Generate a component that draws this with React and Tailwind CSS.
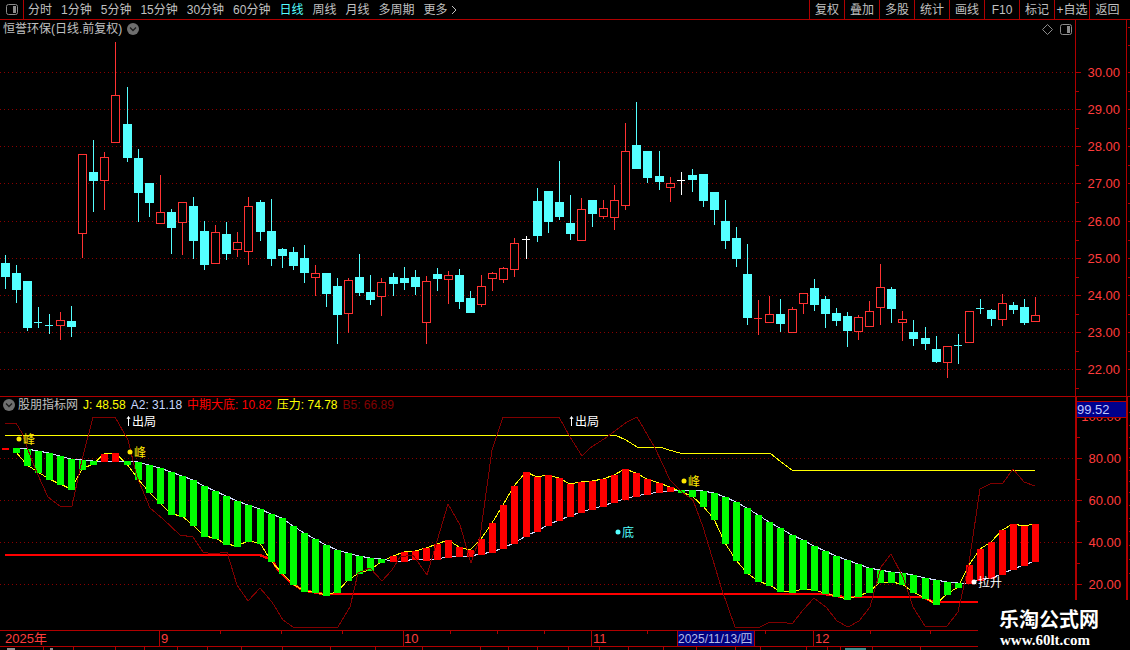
import React from "react";

const tabs = [
  { label: "分时" },
  { label: "1分钟" },
  { label: "5分钟" },
  { label: "15分钟" },
  { label: "30分钟" },
  { label: "60分钟" },
  { label: "日线", active: true },
  { label: "周线" },
  { label: "月线" },
  { label: "多周期" },
];

const tools = ["复权", "叠加", "多股", "统计", "画线", "F10", "标记", "+自选"];

// [type, high, top, bottom, low] in page pixels, one per trading day
const candles = [
  ["c", 255, 263, 276, 288], ["c", 265, 273, 289, 302], ["c", 281, 281, 327, 330], ["c", 307, 322, 322, 327],
  ["c", 314, 325, 325, 333], ["r", 312, 320, 325, 339], ["c", 306, 321, 326, 336], ["r", 154, 154, 233, 257],
  ["c", 140, 172, 180, 211], ["r", 152, 157, 180, 209], ["r", 42, 95, 142, 142], ["c", 87, 124, 157, 161],
  ["c", 149, 158, 192, 221], ["c", 183, 183, 202, 216], ["r", 175, 212, 223, 223], ["c", 209, 212, 227, 253],
  ["r", 202, 202, 222, 254], ["c", 197, 206, 240, 258], ["c", 221, 231, 264, 269], ["r", 225, 232, 263, 263],
  ["c", 222, 234, 253, 259], ["r", 232, 242, 249, 256], ["r", 197, 206, 251, 264], ["c", 200, 202, 231, 240],
  ["c", 199, 231, 258, 265], ["c", 248, 249, 255, 267], ["c", 247, 252, 265, 269], ["c", 245, 258, 272, 282],
  ["r", 265, 273, 277, 295], ["c", 273, 273, 293, 306], ["c", 278, 286, 314, 343], ["r", 278, 280, 313, 332],
  ["c", 254, 277, 292, 295], ["c", 275, 292, 299, 304], ["r", 278, 282, 296, 315], ["c", 273, 277, 283, 295],
  ["c", 267, 278, 282, 289], ["c", 270, 277, 286, 294], ["r", 276, 281, 322, 343], ["c", 268, 274, 278, 290],
  ["r", 271, 275, 279, 303], ["c", 269, 275, 301, 308], ["c", 291, 298, 312, 312], ["r", 275, 286, 304, 306],
  ["r", 272, 273, 278, 290], ["r", 267, 268, 279, 282], ["r", 238, 243, 269, 276], ["w", 236, 239, 239, 258],
  ["c", 188, 201, 235, 241], ["c", 191, 191, 221, 232], ["c", 161, 202, 216, 219], ["c", 195, 223, 233, 239],
  ["r", 198, 209, 240, 240], ["c", 200, 200, 213, 226], ["r", 200, 208, 216, 218], ["r", 185, 200, 217, 229],
  ["r", 123, 151, 205, 209], ["c", 102, 145, 168, 168], ["c", 151, 151, 177, 182], ["c", 151, 176, 181, 189],
  ["r", 177, 183, 187, 201], ["w", 172, 180, 180, 194], ["c", 169, 175, 179, 191], ["c", 174, 174, 200, 206],
  ["c", 192, 192, 209, 224], ["c", 200, 221, 240, 248], ["c", 227, 238, 258, 266], ["c", 244, 274, 317, 324],
  ["r", 300, 318, 318, 334], ["r", 296, 314, 322, 322], ["c", 299, 314, 323, 331], ["r", 307, 309, 332, 332],
  ["r", 293, 293, 303, 313], ["c", 279, 288, 304, 310], ["c", 296, 299, 313, 327], ["c", 308, 313, 320, 325],
  ["c", 312, 316, 330, 346], ["r", 315, 317, 331, 339], ["r", 301, 311, 326, 326], ["r", 264, 287, 307, 324],
  ["c", 287, 289, 308, 322], ["r", 311, 319, 322, 340], ["c", 320, 332, 338, 345], ["c", 327, 338, 343, 349],
  ["c", 336, 349, 361, 362], ["r", 346, 346, 362, 377], ["c", 334, 345, 345, 363], ["r", 311, 311, 342, 342],
  ["c", 299, 308, 308, 313], ["c", 309, 310, 318, 325], ["r", 294, 303, 319, 325], ["c", 302, 305, 309, 313],
  ["c", 299, 307, 322, 324], ["r", 297, 315, 321, 321],
];

// [top, bottom] of each indicator bar, page pixels
const bars = [
  [448, 449], [448, 452], [449, 465], [451, 472], [453, 479], [456, 484], [459, 489], [460, 469],
  [461, 464], [454, 461], [453, 461], [461, 464], [462, 479], [465, 492], [468, 503], [472, 514],
  [476, 516], [480, 525], [486, 536], [491, 538], [496, 544], [501, 546], [505, 541], [509, 543],
  [514, 561], [518, 573], [526, 584], [533, 591], [539, 592], [545, 595], [550, 592], [553, 580],
  [556, 573], [558, 570], [559, 562], [556, 561], [552, 561], [551, 559], [548, 560], [544, 559],
  [540, 557], [547, 556], [550, 556], [539, 554], [523, 552], [505, 548], [486, 543], [472, 536],
  [477, 531], [475, 525], [478, 520], [484, 516], [482, 512], [481, 509], [479, 506], [475, 502],
  [469, 499], [473, 496], [479, 494], [483, 492], [487, 491], [490, 492], [490, 496], [491, 506],
  [493, 519], [497, 543], [502, 560], [508, 573], [515, 581], [522, 585], [528, 591], [535, 592],
  [540, 589], [546, 590], [551, 593], [556, 596], [560, 599], [564, 596], [568, 592], [570, 582],
  [572, 582], [573, 584], [575, 592], [578, 598], [580, 604], [582, 594], [583, 587], [565, 583],
  [549, 580], [542, 578], [530, 574], [524, 569], [526, 565], [524, 561],
];

const isRedBar = (i) => i === 0 || i === 9 || i === 10 || (i >= 35 && i <= 60) || i >= 87;
const dayX = (i) => 5 + 11 * i + Math.floor((i + 1) / 12);

const priceLevels = [
  [72, "30.00"], [109, "29.00"], [146, "28.00"], [183, "27.00"], [221, "26.00"],
  [258, "25.00"], [295, "24.00"], [332, "23.00"], [369, "22.00"],
];
const indicatorLevels = [
  [458, "80.00"], [500, "60.00"], [542, "40.00"], [584, "20.00"],
];

const b5Line = "5,423 16,423 22,433 31,458 37,473 48,497 60,506 72,506 82,460 93,417 115,417 128,440 137,477 150,508 163,519 180,535 193,537 203,552 213,554 227,552 237,585 248,601 260,588 272,602 283,620 293,627 338,627 350,607 358,573 370,568 382,581 392,570 400,557 413,555 427,575 448,504 460,525 471,563 480,537 492,450 503,417 559,417 570,437 582,456 590,448 607,437 627,422 637,417 655,448 670,480 683,493 693,500 703,527 722,590 735,627 760,627 770,622 782,622 792,624 803,610 814,598 826,607 837,621 848,627 859,621 870,607 881,567 891,554 903,577 913,607 925,626 947,626 958,612 969,563 980,489 992,483 1003,483 1013,469 1024,482 1035,486";
const pressureLine = "5,435 615,435 626,440 637,447 660,447 669,450 680,453 770,453 781,462 792,470 1035,470";
const bottomLine = "5,555 260,555 272,560 278,570 290,582 302,590 323,594 825,594 843,597 923,597 933,602 985,602";

const lineTop = bars.slice(1).map((b, n) => `${dayX(n + 1)},${isRedBar(n + 1) ? b[0] : b[1]}`).join(" ");
const lineBottom = bars.slice(1).map((b, n) => `${dayX(n + 1)},${isRedBar(n + 1) ? b[1] : b[0]}`).join(" ");

const Chevron = ({ className }) => (
  <svg width="12" height="12" viewBox="0 0 12 12" className={className}>
    <circle cx="6" cy="6" r="6" fill="#6f6f6f" />
    <path d="M3 4.5 L6 7.5 L9 4.5" fill="none" stroke="#1c1c1c" strokeWidth="1.3" />
  </svg>
);

const PanelIcon = ({ className }) => (
  <svg width="12" height="11" viewBox="0 0 12 11" className={className}>
    <rect x="0.5" y="0.5" width="11" height="10" rx="2" fill="none" stroke="#8c8c8c" />
    <rect x="7" y="2" width="3" height="7" fill="#8c8c8c" />
  </svg>
);

const Candle = ({ c, i }) => {
  const [type, hi, top, bot, lo] = c;
  const x = dayX(i);
  const color = type === "c" ? "#54ffff" : type === "w" ? "#ffffff" : "#ff3232";

  if (top === bot) {
    return (
      <g fill={color}>
        <rect x={x} y={hi} width="1" height={lo - hi + 1} />
        <rect x={x - 4} y={top} width="8" height="1" />
      </g>
    );
  }

  return (
    <g>
      <rect x={x} y={hi} width="1" height={top - hi} fill={color} />
      <rect x={x} y={bot} width="1" height={lo - bot + 1} fill={color} />
      {type === "c" ? (
        <rect x={x - 4} y={top} width="9" height={bot - top + 1} fill={color} />
      ) : (
        <rect x={x - 3.5} y={top + 0.5} width="8" height={bot - top} fill="#000" stroke={color} />
      )}
    </g>
  );
};

// one dark red pixel every four, like the terminal's dotted grid
const GridRows = ({ id, levels }) => (
  <g>
    <defs>
      <pattern id={id} width="4" height="1" patternUnits="userSpaceOnUse">
        <rect width="1" height="1" fill="#8a0000" />
      </pattern>
    </defs>
    {levels.map(([y]) => (
      <g key={y} transform={`translate(0 ${y})`}>
        <rect width="1075" height="1" fill={`url(#${id})`} />
      </g>
    ))}
  </g>
);

const Marker = ({ x, y, color, label, dot = "#ffe800" }) => (
  <g>
    <circle cx={x} cy={y} r="2.5" fill={dot} />
    <text x={x + 4} y={y + 5} fontSize="12" fill={color}>{label}</text>
  </g>
);

const ExitMark = ({ x }) => (
  <g>
    <path d={`M${x + 0.5} 426 V417 M${x - 1} 419 L${x + 0.5} 416.5 L${x + 2} 419`} stroke="#fff" fill="none" />
    <text x={x + 4} y="426" fontSize="12" fill="#fff">出局</text>
  </g>
);

const AxisTicks = ({ levels, offset, step }) => (
  <svg width="49" height="100%" viewBox={offset} className="block">
    {levels.map(([y, label]) => (
      <g key={label}>
        <rect x="0" y={y} width="5" height="1" fill="#b00000" />
        <rect x="0" y={y + step} width="3" height="1" fill="#b00000" />
        <text x="44" y={y + 5} textAnchor="end" fontSize="13" fill="#ff3c3c">{label}</text>
      </g>
    ))}
  </svg>
);

const StripTicks = ({ ys, offset }) => (
  <svg width="4" height="100%" viewBox={offset} className="block">
    {ys.map((y) => (
      <rect key={y} x="1" y={y} width="3" height="1" fill="#b00000" />
    ))}
  </svg>
);

const timeTicksTop = [220, 281, 342, 450, 497, 544, 647, 700, 765, 870, 930];
const timeTicksBottom = [43, 73, 115, 144, 177, 207, 241, 282, 330, 375, 422, 480, 508, 537, 568, 599, 628, 663, 696, 735, 760, 806, 827, 840, 872, 920];

const App = () => {
  return (
    <div className="relative w-[1130px] h-[650px] bg-black overflow-hidden flex flex-col text-[12px] leading-none text-[#c0c0c0] font-['Liberation_Sans','Noto_Sans_CJK_SC',sans-serif]">

      {/* TOP BAR */}
      <div className="h-[20px] shrink-0 flex items-stretch border-b border-[#b00000]">
        <div className="w-[24px] flex items-center justify-center border-r border-[#b00000]">
          <PanelIcon />
        </div>
        <div className="flex items-center gap-[9px] pl-[4px]">
          {tabs.map((tab) => (
            <span key={tab.label} className={tab.active ? "text-[#54ffff]" : ""}>{tab.label}</span>
          ))}
          <span className="flex items-center gap-[3px]">
            更多
            <svg width="6" height="10" viewBox="0 0 6 10">
              <path d="M1 1 L5 5 L1 9" fill="none" stroke="#c0c0c0" />
            </svg>
          </span>
        </div>
        <div className="ml-auto flex items-stretch">
          {tools.map((tool) => (
            <span key={tool} className="w-[35px] flex items-center justify-center border-l border-[#b00000]">{tool}</span>
          ))}
          <span className="w-[41px] pr-[5px] flex items-center justify-center border-l border-[#b00000]">返回</span>
        </div>
      </div>

      {/* PRICE PANE */}
      <div className="h-[377px] shrink-0 flex border-b border-[#b00000]">
        <div className="relative w-[1075px]">
          <svg width="1075" height="376" viewBox="0 20 1075 376" className="block" shapeRendering="crispEdges">
            <GridRows id="price-dots" levels={priceLevels} />
            {candles.map((c, i) => (
              <Candle key={i} c={c} i={i} />
            ))}
          </svg>
          <div className="absolute left-[3px] top-[3px] flex items-center gap-[5px]">
            <span>恒誉环保(日线.前复权)</span>
            <Chevron />
          </div>
          <div className="absolute right-[3px] top-[4px] flex items-center gap-[7px]">
            <svg width="11" height="11" viewBox="0 0 11 11">
              <path d="M5.5 0.5 L10.5 5.5 L5.5 10.5 L0.5 5.5 Z" fill="none" stroke="#8c8c8c" />
            </svg>
            <PanelIcon />
          </div>
        </div>
        <div className="w-[51px] border-l border-[#b00000]">
          <AxisTicks levels={priceLevels} offset="0 20 49 376" step={19} />
        </div>
        <div className="w-[4px] border-l border-[#b00000]">
          <StripTicks ys={[27, 45, 72, 91, 109, 128, 146, 165, 183, 203, 221, 240, 258, 277, 295, 314, 332, 351, 369]} offset="0 20 4 376" />
        </div>
      </div>

      {/* INDICATOR PANE */}
      <div className="h-[233px] shrink-0 flex">
        <div className="relative w-[1075px]">
          <svg width="1075" height="233" viewBox="0 397 1075 233" className="block" shapeRendering="crispEdges" fontFamily="'Noto Sans CJK SC', sans-serif">
            <GridRows id="indicator-dots" levels={indicatorLevels} />
            <polyline points={bottomLine} fill="none" stroke="#ff0000" strokeWidth="2.5" />
            <polyline points={pressureLine} fill="none" stroke="#ffff00" />
            <polyline points={lineTop} fill="none" stroke="#ffff00" />
            <polyline points={lineBottom} fill="none" stroke="#d0dcff" />
            {bars.map((b, i) => (
              <rect
                key={i}
                x={dayX(i) - 3}
                y={b[0]}
                width="7"
                height={b[1] - b[0] + 1}
                fill={isRedBar(i) ? "#ff0000" : "#00ff00"}
              />
            ))}
            <polyline points={b5Line} fill="none" stroke="#800000" />
            <g shapeRendering="auto">
              <Marker x={19} y={439} color="#ffe800" label="峰" />
              <Marker x={130} y={452} color="#ffe800" label="峰" />
              <Marker x={684} y={481} color="#ffe800" label="峰" />
              <Marker x={618} y={532} color="#54ffff" label="底" dot="#54ffff" />
              <Marker x={974} y={582} color="#ffffff" label="拉升" dot="#ffffff" />
              <ExitMark x={128} />
              <ExitMark x={571} />
            </g>
          </svg>
          <div className="absolute left-[3px] top-[2px] flex items-center whitespace-nowrap">
            <Chevron />
            <span className="ml-[3px]">股朋指标网</span>
            <div className="ml-[5px] flex gap-[5px]">
              <span className="text-[#ffff00]">J: 48.58</span>
              <span className="text-[#c8d8ff]">A2: 31.18</span>
              <span className="text-[#ff0000]">中期大底: 10.82</span>
              <span className="text-[#ffff00]">压力: 74.78</span>
              <span className="text-[#800000]">B5: 66.89</span>
            </div>
          </div>
        </div>
        <div className="relative w-[51px] border-l-2 border-[#b00000]">
          <AxisTicks levels={[[416, "100.00"], ...indicatorLevels]} offset="0 397 49 233" step={21} />
          <div className="absolute left-0 right-0 top-[4px] h-[17px] bg-[#00008c] border-y border-[#b00000] text-[#c0c8ff] text-[13px] flex items-center">99.52</div>
        </div>
        <div className="w-[4px] border-l-2 border-[#b00000]">
          <StripTicks ys={[412, 425, 437, 448, 457, 470, 481, 492, 505, 518, 531, 545, 559, 573]} offset="0 397 4 233" />
        </div>
      </div>

      {/* TIME AXIS */}
      <div className="h-[17px] shrink-0 border-y border-[#b00000]">
        <svg width="978" height="15" viewBox="0 631 978 15" className="block" shapeRendering="crispEdges">
          {timeTicksTop.map((x) => (
            <rect key={x} x={x} y="631" width="1" height="3" fill="#b00000" />
          ))}
          <rect x="159" y="631" width="1" height="15" fill="#b00000" />
          <rect x="403" y="631" width="1" height="15" fill="#b00000" />
          <rect x="591" y="631" width="1" height="15" fill="#b00000" />
          <rect x="813" y="631" width="1" height="15" fill="#b00000" />
          <g shapeRendering="auto" fontSize="13" fill="#ff3c3c">
            <text x="5" y="643">2025年</text>
            <text x="161" y="643">9</text>
            <text x="404" y="643">10</text>
            <text x="593" y="643">11</text>
            <text x="815" y="643">12</text>
          </g>
          <rect x="677" y="630" width="77" height="16" fill="#00007e" stroke="#b00000" />
          <text x="678" y="643" fontSize="12" fill="#b4bce8" shapeRendering="auto">2025/11/13/四</text>
        </svg>
      </div>

      {/* BOTTOM STUB */}
      <div className="h-[3px] shrink-0">
        <svg width="978" height="3" viewBox="0 0 978 3" className="block" shapeRendering="crispEdges">
          {timeTicksBottom.map((x) => (
            <rect key={x} x={x} y="0" width="1" height="3" fill="#b00000" />
          ))}
          <rect x="7" y="1" width="8" height="2" fill="#8c8c8c" />
          <rect x="50" y="1" width="3" height="2" fill="#8c8c8c" />
          <rect x="845" y="1" width="21" height="2" fill="#3c8c8c" />
        </svg>
      </div>

      {/* WATERMARK */}
      <div className="absolute right-0 bottom-0 w-[152px] h-[50px] bg-black flex flex-col items-start pl-[21px] pt-[8px]">
        <span className="text-[20px] font-bold leading-[22px] text-white font-['Noto_Sans_CJK_SC',sans-serif]">乐淘公式网</span>
        <span className="mt-[3px] ml-[1px] text-[15px] font-bold leading-[14px] text-white font-['Liberation_Serif',serif]">www.60lt.com</span>
      </div>
    </div>
  );
};

export default App;
